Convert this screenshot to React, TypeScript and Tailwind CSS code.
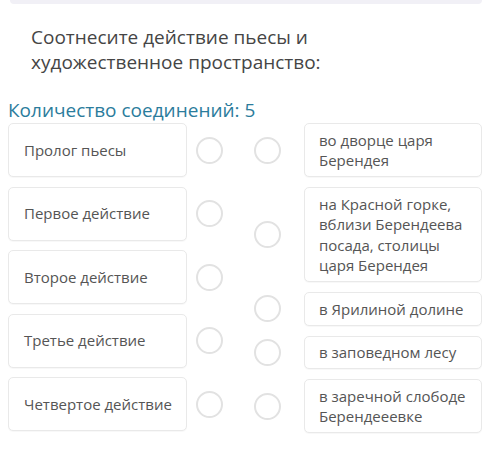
const left = ['Пролог пьесы', 'Первое действие', 'Второе действие', 'Третье действие', 'Четвертое действие']
const right = [
  'во дворце царя Берендея',
  'на Красной горке, вблизи Берендеева посада, столицы царя Берендея',
  'в Ярилиной долине',
  'в заповедном лесу',
  'в заречной слободе Берендееевке',
]

function Circle() {
  return <span className="block w-[27px] h-[27px] shrink-0 rounded-full border-[2.5px] border-[#e2e2e2] bg-white" />
}

export default function App() {
  return (
    <div className="w-[500px] h-[461px] bg-white pl-2 pr-[18px] text-[#4a4a4a]" style={{ fontFamily: '"Open Sans", "Noto Sans", sans-serif' }}>
      <div className="h-[4px] ml-[2px] rounded-b-md bg-[#f1f0f6]" />
      <h1 className="mt-[21px] pl-[23px] text-[19px] leading-[25px] text-[#454545]">
        Соотнесите действие пьесы и<br />художественное пространство:
      </h1>
      <p className="mt-[23px] text-[19px] leading-[25px] text-[#2b7c9c]">Количество соединений: 5</p>

      <div className="mt-[0px] flex justify-between">
        {/* левая колонка */}
        <div className="flex flex-col gap-[9.5px]">
          {left.map(t => (
            <div key={t} className="flex items-center">
              <div className="w-[179px] h-[54px] flex items-center pl-[15px] pr-[8px] whitespace-nowrap bg-white border border-[#e9e9e9] rounded-[5px] shadow-[0_1px_1px_rgba(0,0,0,0.03)] text-[15px] text-[#555]">
                {t}
              </div>
              <span className="ml-[9px]"><Circle /></span>
            </div>
          ))}
        </div>

        {/* правая колонка */}
        <div className="flex flex-col gap-[10px]">
          {right.map(t => (
            <div key={t} className="flex items-center">
              <Circle />
              <div className="ml-[23px] w-[178px] px-[14px] py-[5.5px] bg-white border border-[#e9e9e9] rounded-[5px] shadow-[0_1px_1px_rgba(0,0,0,0.03)] text-[15px] leading-[20.5px] text-[#555]">
                {t}
              </div>
            </div>
          ))}
        </div>
      </div>
    </div>
  )
}
